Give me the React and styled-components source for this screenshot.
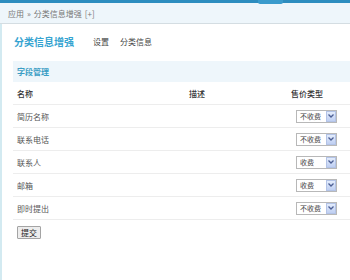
import React from 'react';
import styled, { createGlobalStyle } from 'styled-components';

const GlobalStyle = createGlobalStyle`
    body {
        margin: 0;
        background: #fff;
        font-family: "Noto Sans CJK SC", "Noto Sans", sans-serif;
        font-size: 8px;
        color: #333;
    }
`;

const TopStrip = styled.div`
    height: 3px;
    background-color: #2d8dbf;
    display: flex;
    padding-left: 258px;
`;

const TopBump = styled.div`
    width: 25px;
    height: 4px;
    background-color: #3a9bcc;
    border-radius: 0 0 2px 2px;
    position: relative;
    z-index: 1;
`;

const Crumbs = styled.div`
    height: 20px;
    background-color: #eef6fb;
    border-bottom: 1px solid #d4dde2;
    display: flex;
    align-items: center;
    padding-left: 8px;
    font-size: 8px;
    color: #777;
    gap: 3px;
`;

const Page = styled.div`
    border-left: 2px solid #d3eaf1;
    padding-left: 11px;
    min-height: 256px;
    box-sizing: border-box;
`;

const Header = styled.div`
    height: 34px;
    display: flex;
    align-items: center;
    padding-left: 1px;
`;

const Title = styled.h1`
    margin: 0;
    font-size: 10px;
    font-weight: 700;
    color: #35a3d0;
`;

const NavLink = styled.a`
    font-size: 8px;
    color: #444;
    text-decoration: none;
    margin-left: ${p => p.first ? '19px' : '11px'};
`;

const Section = styled.div`
    margin-top: 3px;
    height: 21px;
    background-color: #eef6fb;
    display: flex;
    align-items: center;
    padding-left: 4px;
    font-size: 8px;
    font-weight: 700;
    color: #3a9dc4;
`;

const Table = styled.div`
    display: flex;
    flex-direction: column;
`;

const Row = styled.div`
    height: 22px;
    display: grid;
    grid-template-columns: 172px 100px 1fr;
    align-items: center;
    padding-left: 4px;
    border-bottom: 1px solid #ededed;
    color: ${p => p.head ? '#333' : '#555'};
    font-weight: ${p => p.head ? 500 : 400};
`;

const PriceCell = styled.div`
    display: flex;
    padding-left: ${p => p.head ? '2px' : '7px'};
`;

const SelectBox = styled.div`
    width: 41px;
    height: 13px;
    border: 1px solid #b8b8b8;
    background: #fff;
    display: flex;
    align-items: center;
    justify-content: space-between;
    font-size: 7px;
    color: #444;
    padding-left: 3px;
    box-sizing: border-box;
`;

const Arrow = styled.span`
    width: 10px;
    height: 11px;
    background: linear-gradient(#e3ecfc, #bfcff2);
    border: 1px solid #b3c3e6;
    box-sizing: border-box;
    display: flex;
    align-items: center;
    justify-content: center;
`;

const Submit = styled.button`
    margin: 6px 0 0 4px;
    height: 13px;
    padding: 0 3px;
    font-family: inherit;
    font-size: 8px;
    line-height: 1;
    color: #222;
    background: #ededed;
    border: 1px solid #a4a4a4;
    border-radius: 1px;
`;

function Select({ value }) {
    return (
        <SelectBox>
            <span>{value}</span>
            <Arrow>
                <svg width="6" height="4" viewBox="0 0 6 4">
                    <path d="M0.5 0.5 L3 3 L5.5 0.5" fill="none" stroke="#4c5f94" strokeWidth="1.3" />
                </svg>
            </Arrow>
        </SelectBox>
    );
}

const fields = [
    { name: '简历名称', price: '不收费' },
    { name: '联系电话', price: '不收费' },
    { name: '联系人', price: '收费' },
    { name: '邮箱', price: '收费' },
    { name: '即时提出', price: '不收费' },
];

export default function App() {
    return (
        <>
            <GlobalStyle />
            <TopStrip><TopBump /></TopStrip>
            <Crumbs>
                <span>应用</span>
                <span>»</span>
                <span>分类信息增强</span>
                <span>[+]</span>
            </Crumbs>
            <Page>
                <Header>
                    <Title>分类信息增强</Title>
                    <NavLink first href="#">设置</NavLink>
                    <NavLink href="#">分类信息</NavLink>
                </Header>
                <Section>字段管理</Section>
                <Table>
                    <Row head>
                        <span>名称</span>
                        <span>描述</span>
                        <PriceCell head>售价类型</PriceCell>
                    </Row>
                    {fields.map(f => (
                        <Row key={f.name}>
                            <span>{f.name}</span>
                            <span></span>
                            <PriceCell><Select value={f.price} /></PriceCell>
                        </Row>
                    ))}
                </Table>
                <Submit>提交</Submit>
            </Page>
        </>
    );
}
